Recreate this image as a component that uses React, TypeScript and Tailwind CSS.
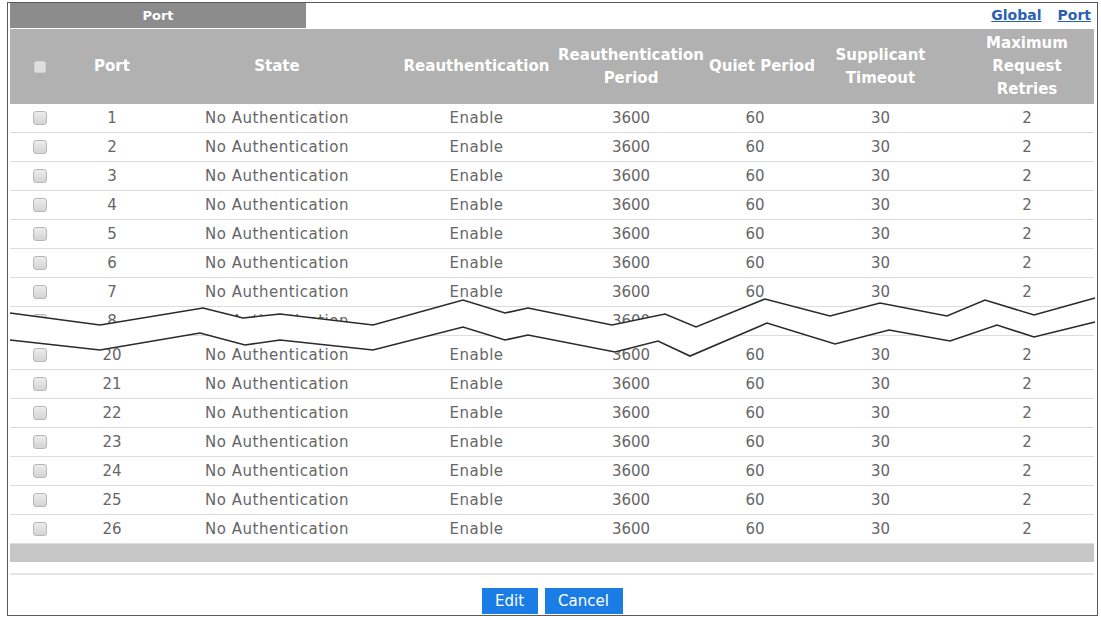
import React from 'react';

const COLS = 'grid grid-cols-[60px_84px_246px_153px_156px_92px_159px_134px]';

const upper: [number, number][] = [
  [10, 313], [100, 325], [203, 308], [243, 318], [280, 314], [373, 325], [463, 300], [505, 313], [528, 308],
  [612, 325], [665, 314], [696, 327], [765, 299], [830, 316], [880, 303], [947, 316], [985, 300], [1034, 315], [1095, 298],
];
const lower: [number, number][] = [
  [10, 340], [100, 350], [200, 333], [245, 345], [280, 340], [373, 350], [463, 327], [505, 340], [528, 335],
  [615, 352], [658, 341], [690, 356], [767, 323], [835, 344], [889, 330], [950, 341], [997, 325], [1034, 337], [1095, 322],
];

const pts = (p: [number, number][]) => p.map(([x, y]) => `${x},${y}`).join(' ');

const Checkbox: React.FC<{ small?: boolean }> = ({ small }) => (
  <span
    className={
      small
        ? 'inline-block w-[12px] h-[12px] rounded-[2px] bg-[#dedede] border border-[#cfcfcf]'
        : 'inline-block w-[14px] h-[14px] rounded-[3px] bg-gradient-to-b from-[#ececec] to-[#d4d4d4] border border-[#b8b8b8]'
    }
  />
);

const Row: React.FC<{ port: number }> = ({ port }) => (
  <div className={`${COLS} h-[29px] items-center text-center text-[15px] text-[#666666] border-b border-[#dcdcdc]`}>
    <div className="flex justify-center"><Checkbox /></div>
    <div>{port}</div>
    <div className="tracking-[0.5px]">No Authentication</div>
    <div className="tracking-[0.5px]">Enable</div>
    <div>3600</div>
    <div>60</div>
    <div>30</div>
    <div>2</div>
  </div>
);

export default function App() {
  return (
    <div className="relative w-[1101px] h-[620px] bg-white overflow-hidden font-['DejaVu_Sans',sans-serif]">
      <div className="ml-[7px] mt-[2px] w-[1091px] h-[614px] border border-[#5a5a5a] pl-[2px] pr-[3px] flex flex-col">
        {/* tab line */}
        <div className="flex h-[25px]">
          <div className="w-[296px] bg-[#8c8c8c] text-white font-bold text-[13px] flex items-center justify-center">
            Port
          </div>
          <div className="flex-1 flex justify-end items-center gap-[16px] pr-[3px] text-[14px] font-bold text-[#2b5fb3]">
            <span className="underline">Global</span>
            <span className="underline">Port</span>
          </div>
        </div>

        {/* header */}
        <div className={`${COLS} mt-[1px] h-[75px] bg-[#b1b1b1] items-center text-center text-white font-bold text-[15px] leading-[23px]`}>
          <div className="flex justify-center"><Checkbox small /></div>
          <div>Port</div>
          <div>State</div>
          <div>Reauthentication</div>
          <div>Reauthentication<br />Period</div>
          <div className="whitespace-nowrap">Quiet Period</div>
          <div>Supplicant<br />Timeout</div>
          <div>Maximum<br />Request<br />Retries</div>
        </div>

        {[1, 2, 3, 4, 5, 6, 7, 8].map((p) => (
          <Row key={p} port={p} />
        ))}
        <div className="h-[5px]" />
        {[20, 21, 22, 23, 24, 25, 26].map((p) => (
          <Row key={p} port={p} />
        ))}

        <div className="h-[18px] bg-[#c6c6c6]" />
        <div className="mt-[11px] h-[2px] bg-[#e4e4e4]" />

        <div className="mt-[13px] flex justify-center gap-[7px]">
          <button className="w-[56px] h-[26px] bg-[#1a7de6] text-white text-[15px]">Edit</button>
          <button className="w-[78px] h-[26px] bg-[#1a7de6] text-white text-[15px]">Cancel</button>
        </div>
      </div>

      {/* break marker over the skipped rows */}
      <svg className="absolute inset-0 pointer-events-none" width="1101" height="620" viewBox="0 0 1101 620">
        <polygon points={pts([...upper, ...[...lower].reverse()])} fill="#ffffff" />
        <polyline points={pts(upper)} fill="none" stroke="#2a2a2a" strokeWidth="1.6" />
        <polyline points={pts(lower)} fill="none" stroke="#2a2a2a" strokeWidth="1.6" />
      </svg>
    </div>
  );
}
